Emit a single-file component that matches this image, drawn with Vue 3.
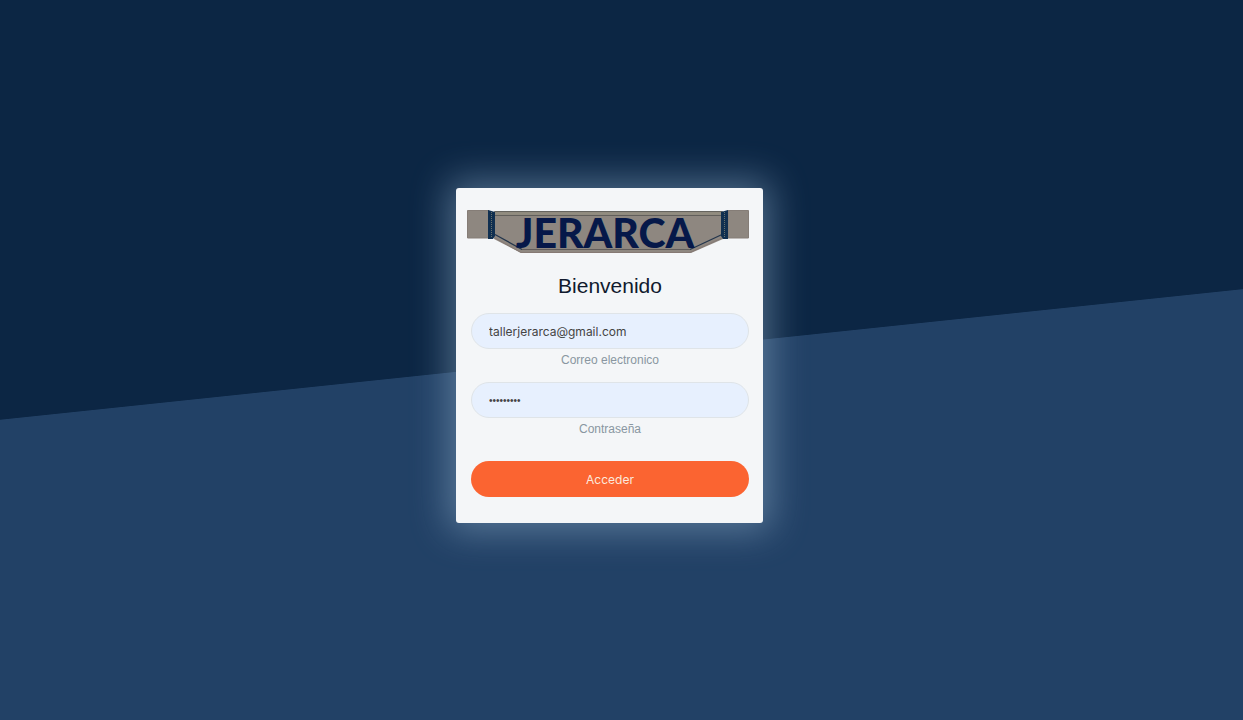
<script setup>
import { ref } from 'vue'

const email = ref('tallerjerarca@gmail.com')
const password = ref('jerarca12')
</script>

<template>
  <main class="page">
    <form class="card" @submit.prevent>
      <svg class="logo" viewBox="0 0 282 44" role="img" aria-label="Jerarca">
        <path d="M27 1H256V29L224 43H54L27 29Z" fill="#8e8780" />
        <path d="M28 1.5H255" stroke="#66655f" />
        <path d="M28 3.5H255" stroke="#918d7f" stroke-width="2" />
        <path d="M28 5.5H255" stroke="#615f5b" />
        <path d="M28 24.500L55 39.500M255 24.500L223 39.500" stroke="#24364c" stroke-width="1.300" />
        <path d="M28 28L54 42.500H223L255 28" fill="none" stroke="#857974" />
        <path d="M55 39.500H223" stroke="#625d5b" />
        <path d="M0.500 0.500H22V28H0.500ZM261 0.500H281.500V28H261Z" fill="#8e8780" stroke="#857d77" />
        <path d="M21 0L28 2V26L26 29H21ZM261 0L254 2V26L256 29H261Z" fill="#102f50" />
        <path d="M24.500 2V27M257.500 2V27" stroke="#66706d" stroke-dasharray="1 1" />
        <text x="138" y="38" text-anchor="middle">JERARCA</text>
      </svg>
      <h1>Bienvenido</h1>
      <div class="field">
        <input id="email" v-model="email" type="email" autocomplete="username">
        <label for="email">Correo electronico</label>
      </div>
      <div class="field">
        <input id="password" v-model="password" type="password" autocomplete="current-password">
        <label for="password">Contraseña</label>
      </div>
      <button type="submit">Acceder</button>
    </form>
  </main>
</template>

<style>
body {
  background: #0c2644;
}
</style>

<style scoped>
.page {
  box-sizing: border-box;
  min-height: 100vh;
  padding: 0 24px 9px 0;
  display: flex;
  align-items: center;
  justify-content: center;
  background: linear-gradient(-6deg, #224166 50.6%, #0c2644 50.7%);
  font-family: "Liberation Sans", Arial, sans-serif;
}

.card {
  box-sizing: border-box;
  width: 100%;
  max-width: 307px;
  padding: 22px 14px 26px 15px;
  display: flex;
  flex-direction: column;
  border-radius: 3px;
  background: #f4f6f8;
  box-shadow: 0 0 36px 8px rgba(148, 180, 206, 0.48);
}

.logo {
  display: block;
  width: 282px;
  height: 44px;
  margin-left: -4px;
  overflow: visible;
}

.logo text {
  font: 900 41px Lato, sans-serif;
  fill: #061849;
}

h1 {
  margin: 20px 0 15px;
  font-size: 21px;
  line-height: 24px;
  font-weight: 400;
  text-align: center;
  color: #101a2e;
}

.field {
  display: flex;
  flex-direction: column;
  margin-bottom: 13px;
}

input {
  box-sizing: border-box;
  width: 100%;
  height: 36px;
  padding: 0 17px;
  border: 1px solid #dfe4e8;
  border-radius: 18px;
  outline: none;
  background: #e7f0fe;
  color: #444;
  font: 12px Inter, sans-serif;
}

input[type="password"] {
  font: 10px "Liberation Sans", Arial, sans-serif;
}

label {
  margin-top: 3px;
  font-size: 12px;
  line-height: 17px;
  text-align: center;
  color: #8996a1;
}

button {
  height: 36px;
  margin-top: 10px;
  padding: 0;
  border: 0;
  border-radius: 18px;
  background: #fb6431;
  color: #fce9dd;
  font: 12px Inter, sans-serif;
  cursor: pointer;
}
</style>
